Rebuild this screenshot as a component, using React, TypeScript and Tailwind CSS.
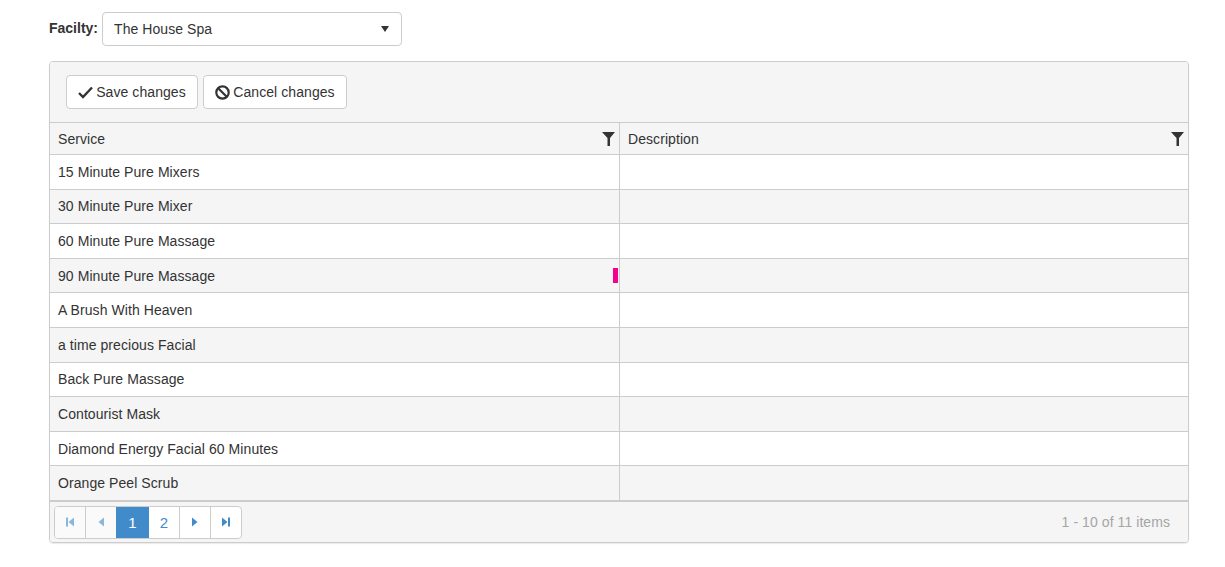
const services = [
  "15 Minute Pure Mixers",
  "30 Minute Pure Mixer",
  "60 Minute Pure Massage",
  "90 Minute Pure Massage",
  "A Brush With Heaven",
  "a time precious Facial",
  "Back Pure Massage",
  "Contourist Mask",
  "Diamond Energy Facial 60 Minutes",
  "Orange Peel Scrub",
];

function FilterIcon() {
  return (
    <svg width="13" height="14" viewBox="0 0 13 14" className="text-[#333]">
      <path d="M0 0h13L8 6v8H5.5V6z" fill="currentColor" />
    </svg>
  );
}

// pager arrows, kendo style
function PagerIcon({ kind }: { kind: "first" | "prev" | "next" | "last" }) {
  return (
    <svg width="10" height="10" viewBox="0 0 10 10" fill="currentColor">
      {kind === "first" && <path d="M1 .5h2v9H1zM9 .5v9L3.500 5z" />}
      {kind === "prev" && <path d="M8 .5v9L2.500 5z" />}
      {kind === "next" && <path d="M2 .5v9L7.500 5z" />}
      {kind === "last" && <path d="M7 .5h2v9H7zM1 .5v9L6.500 5z" />}
    </svg>
  );
}

export default function App() {
  return (
    <div className="min-h-[567px] bg-white pl-[49px] pr-9 pt-3 font-['Liberation_Sans',Arial,sans-serif] text-sm text-[#333]">
      {/* Facility */}
      <div className="flex items-center">
        <span className="mr-1 -translate-y-px font-bold">Facilty:</span>
        <div className="flex h-[34px] w-[300px] items-center justify-between rounded border border-[#ccc] bg-white pl-[11px] pr-3 tracking-[0.07px]">
          <span>The House Spa</span>
          <svg width="8" height="6" viewBox="0 0 8 6" className="text-[#333]">
            <path d="M0 0h8L4 6z" fill="currentColor" />
          </svg>
        </div>
      </div>

      {/* Grid */}
      <div className="mt-[15px] h-[482px] w-[1140px] overflow-hidden rounded border border-[#ccc] tracking-[0.07px] shadow-[0_1px_1px_rgba(0,0,0,0.08)]">
        <div className="flex h-[60px] items-center gap-[5px] bg-[#f5f5f5] pl-4">
          <button className="flex h-[34px] w-[132px] items-center justify-center gap-[3px] rounded border border-[#ccc] bg-white">
            <svg width="15" height="13" viewBox="0 0 15 13" className="text-[#333]">
              <path d="M1 7l4 4 9-9.500" fill="none" stroke="currentColor" strokeWidth="2.400" />
            </svg>
            Save changes
          </button>
          <button className="flex h-[34px] w-[144px] items-center justify-center gap-[3px] rounded border border-[#ccc] bg-white">
            <svg width="15" height="15" viewBox="0 0 15 15" className="text-[#333]">
              <circle cx="7.500" cy="7.500" r="6.200" fill="none" stroke="currentColor" strokeWidth="2.200" />
              <path d="M3 3l9 9" stroke="currentColor" strokeWidth="2.200" />
            </svg>
            Cancel changes
          </button>
        </div>

        <div className="flex h-[33px] border-y border-[#ccc] bg-[#f5f5f5]">
          <div className="flex w-[570px] items-center justify-between border-r border-[#ccc] pl-2 pr-[4px]">
            <span>Service</span>
            <FilterIcon />
          </div>
          <div className="flex flex-1 items-center justify-between pl-2 pr-[4px]">
            <span>Description</span>
            <FilterIcon />
          </div>
        </div>

        {services.map((name, i) => (
          <div
            key={name}
            className={`flex h-[34.600px] border-b border-[#ccc] ${i % 2 === 1 ? "bg-[#f5f5f5]" : "bg-white"}`}
          >
            <div className="flex w-[570px] items-center justify-between border-r border-[#ccc] pl-2 pr-px">
              <span>{name}</span>
              {i === 3 && <span className="h-[15px] w-[5px] bg-[#f5008f]" />}
            </div>
            <div className="flex-1" />
          </div>
        ))}

        {/* Pager */}
        <div className="flex h-[42px] items-center justify-between border-t border-[#ccc] bg-[#f5f5f5] pl-1 pr-[18px]">
          <div className="flex h-[33px] w-[188px] overflow-hidden rounded border border-[#ccc] bg-white text-[#428bca]">
            <span className="flex w-[31px] items-center justify-center border-r border-[#ccc] bg-[#fafafa] text-[#8ab6dc]">
              <PagerIcon kind="first" />
            </span>
            <span className="flex w-[30px] items-center justify-center bg-[#fafafa] text-[#8ab6dc]">
              <PagerIcon kind="prev" />
            </span>
            <span className="flex w-[33px] items-center justify-center bg-[#428bca] text-[15px] text-white">1</span>
            <span className="flex w-[31px] items-center justify-center border-r border-[#ccc] text-[15px]">2</span>
            <span className="flex w-[31px] items-center justify-center border-r border-[#ccc]">
              <PagerIcon kind="next" />
            </span>
            <span className="flex flex-1 items-center justify-center">
              <PagerIcon kind="last" />
            </span>
          </div>
          <span className="text-[#a5a5a5]">1 - 10 of 11 items</span>
        </div>
      </div>
    </div>
  );
}
